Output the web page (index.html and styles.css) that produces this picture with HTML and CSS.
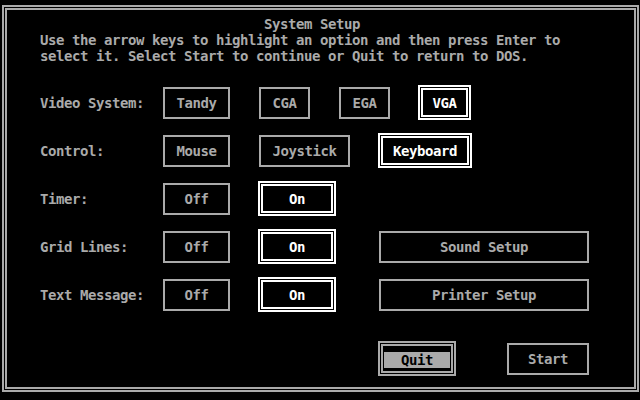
FILE: index.html
```html
<!DOCTYPE html>
<html>
<head>
<meta charset="utf-8">
<link rel="stylesheet" href="styles.css">
</head>
<body>
<div class="screen">
  <div class="frame">
    <div class="frame-in">
      <div class="content">
        <div class="intro">
          <div class="title">System Setup</div>
          <div class="line">Use the arrow keys to highlight an option and then press Enter to</div>
          <div class="line">select it. Select Start to continue or Quit to return to DOS.</div>
        </div>
        <div class="rows">
          <div class="row">
            <span class="label">Video System:</span>
            <span class="btn w67">Tandy</span>
            <span class="btn w51">CGA</span>
            <span class="btn w51">EGA</span>
            <span class="btn sel w53"><span class="in">VGA</span></span>
          </div>
          <div class="row">
            <span class="label">Control:</span>
            <span class="btn w67">Mouse</span>
            <span class="btn w91">Joystick</span>
            <span class="btn sel w94"><span class="in">Keyboard</span></span>
          </div>
          <div class="row">
            <span class="label">Timer:</span>
            <span class="btn w67">Off</span>
            <span class="btn sel w78"><span class="in">On</span></span>
          </div>
          <div class="row">
            <span class="label">Grid Lines:</span>
            <span class="btn w67">Off</span>
            <span class="btn sel w78"><span class="in">On</span></span>
            <span class="btn w210 push">Sound Setup</span>
          </div>
          <div class="row">
            <span class="label">Text Message:</span>
            <span class="btn w67">Off</span>
            <span class="btn sel w78"><span class="in">On</span></span>
            <span class="btn w210 push">Printer Setup</span>
          </div>
          <div class="row actions">
            <span class="btn sel focus w78"><span class="in"><span class="bar">Quit</span></span></span>
            <span class="btn w82">Start</span>
          </div>
        </div>
      </div>
    </div>
  </div>
</div>
</body>
</html>
```
FILE: styles.css
```css
html, body {
  margin: 0;
  padding: 0;
  background: #000;
}
body {
  width: 640px;
  height: 400px;
  overflow: hidden;
  font-family: "DejaVu Sans Mono", "Liberation Mono", monospace;
  font-weight: bold;
  font-size: 14px;
  letter-spacing: -0.43px;
  color: #aaa;
}
.screen {
  box-sizing: border-box;
  width: 640px;
  height: 400px;
  padding: 5px 1px 8px 2px;
}
.frame {
  box-sizing: border-box;
  height: 100%;
  border: 2px solid #aaa;
  padding: 1px;
}
.frame-in {
  box-sizing: border-box;
  height: 100%;
  border: 2px solid #aaa;
}
.content {
  width: 549px;
  padding: 6px 0 0 33px;
}
.intro {
  line-height: 16px;
}
.title,
.line {
  height: 16px;
  white-space: pre;
}
.title {
  padding-left: 224px;
}
.rows {
  margin-top: 23px;
}
.row {
  display: flex;
  align-items: flex-start;
  gap: 29px;
  height: 32px;
  margin-bottom: 16px;
}
.label {
  flex: 0 0 94px;
  min-width: 0;
  line-height: 32px;
  white-space: pre;
}
.btn {
  box-sizing: border-box;
  flex: none;
  height: 32px;
  border: 2px solid #aaa;
  display: flex;
  align-items: center;
  justify-content: center;
  white-space: pre;
}
.btn.sel {
  height: 35px;
  margin: -2px -1px -1px -1px;
  border-color: #fff;
  padding: 1px;
  color: #fff;
}
.btn.sel .in {
  box-sizing: border-box;
  flex: 1;
  align-self: stretch;
  border: 2px solid #fff;
  display: flex;
  align-items: center;
  justify-content: center;
}
.btn.focus {
  border-color: #aaa;
}
.btn.focus .in {
  border-color: #aaa;
  padding-top: 2px;
}
.bar {
  width: 66px;
  height: 16px;
  line-height: 16px;
  background: #aaa;
  color: #000;
  text-align: center;
}
.push {
  margin-left: auto;
}
.actions {
  margin-top: 32px;
  justify-content: flex-end;
  gap: 52px;
}
.w51 { width: 51px; }
.w53 { width: 53px; }
.w67 { width: 67px; }
.w78 { width: 78px; }
.w82 { width: 82px; }
.w91 { width: 91px; }
.w94 { width: 94px; }
.w210 { width: 210px; }
```
